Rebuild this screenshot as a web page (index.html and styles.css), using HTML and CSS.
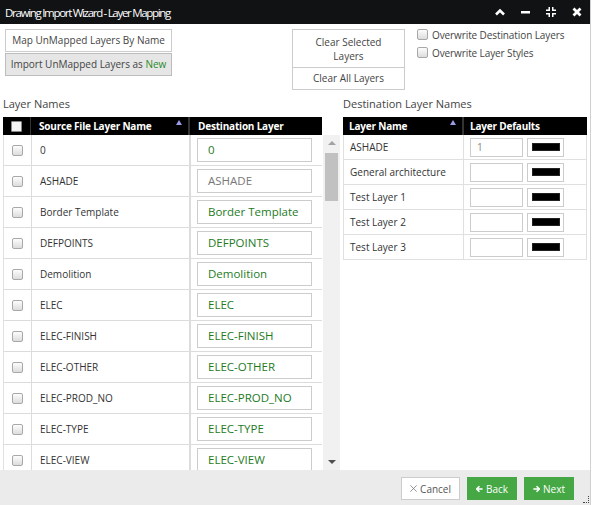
FILE: index.html
```html
<!DOCTYPE html>
<html lang="en">
<head>
  <meta charset="UTF-8">
  <title>Drawing Import Wizard - Layer Mapping</title>
  <link rel="stylesheet" href="styles.css">
</head>
<body>
<div class="dialog">
  <div class="titlebar">
    <span class="title">Drawing Import Wizard - Layer Mapping</span>
    <div class="win-icons">
      <svg width="10" height="8" viewBox="0 0 10 8"><path d="M1 6.5 L5 2.5 L9 6.5" fill="none" stroke="#fff" stroke-width="2.6"/></svg>
      <svg width="9" height="8" viewBox="0 0 9 8"><rect x="0" y="3" width="9" height="2.5" fill="#fff"/></svg>
      <svg width="10" height="10" viewBox="0 0 10 10" fill="#fff">
        <path d="M0 2.5 H2.5 V0 H4 V4 H0 Z"/>
        <path d="M10 2.5 H7.5 V0 H6 V4 H10 Z"/>
        <path d="M0 7.5 H2.5 V10 H4 V6 H0 Z"/>
        <path d="M10 7.5 H7.5 V10 H6 V6 H10 Z"/>
      </svg>
      <svg width="10" height="10" viewBox="0 0 10 10"><path d="M1.5 1.5 L8.5 8.5 M8.5 1.5 L1.5 8.5" stroke="#fff" stroke-width="2.8"/></svg>
    </div>
  </div>

  <div class="toolbar">
    <div class="map-btns">
      <button class="btn">Map UnMapped Layers By Name</button>
      <button class="btn btn-grey">Import UnMapped Layers as <span class="green">New</span></button>
    </div>
    <div class="clear-btns">
      <button class="btn btn-tall">Clear Selected<br>Layers</button>
      <button class="btn">Clear All Layers</button>
    </div>
    <div class="options">
      <label class="opt"><span class="cb"></span>Overwrite Destination Layers</label>
      <label class="opt"><span class="cb"></span>Overwrite Layer Styles</label>
    </div>
  </div>

  <div class="panels">
    <div class="panel panel-left">
      <div class="panel-title">Layer Names</div>
      <div class="left-grid">
        <div class="grid-main">
          <div class="grid-head">
            <div class="col-cb"><span class="cb cb-head"></span></div>
            <div class="col-src">Source File Layer Name <span class="sort"></span></div>
            <div class="col-dst">Destination Layer</div>
          </div>
          <div class="grid-body">
            <div class="row"><div class="col-cb"><span class="cb"></span></div><div class="col-src">0</div><div class="col-dst"><div class="field">0</div></div></div>
            <div class="row"><div class="col-cb"><span class="cb"></span></div><div class="col-src">ASHADE</div><div class="col-dst"><div class="field field-grey">ASHADE</div></div></div>
            <div class="row"><div class="col-cb"><span class="cb"></span></div><div class="col-src">Border Template</div><div class="col-dst"><div class="field">Border Template</div></div></div>
            <div class="row"><div class="col-cb"><span class="cb"></span></div><div class="col-src">DEFPOINTS</div><div class="col-dst"><div class="field">DEFPOINTS</div></div></div>
            <div class="row"><div class="col-cb"><span class="cb"></span></div><div class="col-src">Demolition</div><div class="col-dst"><div class="field">Demolition</div></div></div>
            <div class="row"><div class="col-cb"><span class="cb"></span></div><div class="col-src">ELEC</div><div class="col-dst"><div class="field">ELEC</div></div></div>
            <div class="row"><div class="col-cb"><span class="cb"></span></div><div class="col-src">ELEC-FINISH</div><div class="col-dst"><div class="field">ELEC-FINISH</div></div></div>
            <div class="row"><div class="col-cb"><span class="cb"></span></div><div class="col-src">ELEC-OTHER</div><div class="col-dst"><div class="field">ELEC-OTHER</div></div></div>
            <div class="row"><div class="col-cb"><span class="cb"></span></div><div class="col-src">ELEC-PROD_NO</div><div class="col-dst"><div class="field">ELEC-PROD_NO</div></div></div>
            <div class="row"><div class="col-cb"><span class="cb"></span></div><div class="col-src">ELEC-TYPE</div><div class="col-dst"><div class="field">ELEC-TYPE</div></div></div>
            <div class="row"><div class="col-cb"><span class="cb"></span></div><div class="col-src">ELEC-VIEW</div><div class="col-dst"><div class="field">ELEC-VIEW</div></div></div>
          </div>
        </div>
        <div class="scrollbar">
          <span class="arrow-up"></span>
          <div class="thumb"></div>
          <span class="arrow-down"></span>
        </div>
      </div>
    </div>

    <div class="panel panel-right">
      <div class="panel-title">Destination Layer Names</div>
      <div class="dest-grid">
        <div class="grid-head">
          <div class="col-name">Layer Name <span class="sort"></span></div>
          <div class="col-def">Layer Defaults</div>
        </div>
        <div class="dest-row"><div class="col-name">ASHADE</div><div class="col-def"><div class="num-field">1</div><div class="color-field"><span class="swatch"></span></div></div></div>
        <div class="dest-row"><div class="col-name">General architecture</div><div class="col-def"><div class="num-field"></div><div class="color-field"><span class="swatch"></span></div></div></div>
        <div class="dest-row"><div class="col-name">Test Layer 1</div><div class="col-def"><div class="num-field"></div><div class="color-field"><span class="swatch"></span></div></div></div>
        <div class="dest-row"><div class="col-name">Test Layer 2</div><div class="col-def"><div class="num-field"></div><div class="color-field"><span class="swatch"></span></div></div></div>
        <div class="dest-row"><div class="col-name">Test Layer 3</div><div class="col-def"><div class="num-field"></div><div class="color-field"><span class="swatch"></span></div></div></div>
      </div>
    </div>
  </div>

  <div class="footer">
    <button class="btn-cancel"><svg width="9" height="9" viewBox="0 0 9 9"><path d="M0.5 0.5 L8.5 8.5 M8.5 0.5 L0.5 8.5" stroke="#777" stroke-width="1"/></svg>Cancel</button>
    <button class="btn-green"><svg width="10" height="10" viewBox="0 0 10 10"><path d="M5 1 L1 5 L5 9 M1.5 5 H9.5" fill="none" stroke="#fff" stroke-width="2.2"/></svg>Back</button>
    <button class="btn-green"><svg width="10" height="10" viewBox="0 0 10 10"><path d="M5 1 L9 5 L5 9 M8.5 5 H0.5" fill="none" stroke="#fff" stroke-width="2.2"/></svg>Next</button>
    <span class="grip"></span>
  </div>
</div>
</body>
</html>
```

FILE: styles.css
```css
body {
  margin: 0;
  background: #fff;
  font-family: "Open Sans", "DejaVu Sans", sans-serif;
  color: #333;
}

.dialog {
  width: 590px;
  height: 505px;
  border-right: 1px solid #d0d0d0;
  display: flex;
  flex-direction: column;
  position: relative;
}

/* title bar */
.titlebar {
  height: 24px;
  background: #111214;
  display: flex;
  align-items: center;
  justify-content: space-between;
  padding: 0 8px 0 5px;
}
.title {
  color: #fff;
  font-size: 11.5px;
  letter-spacing: -1.3px;
}
.win-icons {
  display: flex;
  align-items: center;
  gap: 16px;
}
.win-icons svg { display: block; }

/* toolbar */
.toolbar {
  display: flex;
  padding: 5px 5px 5px 5px;
  height: 61px;
}
.btn {
  display: block;
  font-family: inherit;
  font-size: 10px;
  white-space: nowrap;
  color: #444;
  background: #fff;
  border: 1px solid #ccc;
  height: 23px;
  padding: 0;
  margin: 0;
  line-height: 21px;
}
.btn-grey {
  background: #e6e6e6;
  border-color: #bdbdbd;
  margin-top: 1px;
}
.green { color: #2a8a2a; }
.map-btns { width: 167px; }
.map-btns .btn { width: 167px; }
.clear-btns {
  width: 113px;
  margin-left: 120px;
}
.clear-btns .btn { width: 113px; }
.btn-tall {
  height: 38px;
  line-height: 14px;
  border-bottom: none;
}
.options {
  margin-left: 12px;
  margin-top: -2px;
  display: flex;
  flex-direction: column;
  gap: 3px;
}
.opt {
  display: flex;
  align-items: center;
  font-size: 10px;
  letter-spacing: -0.1px;
  color: #444;
  height: 15px;
}
.opt .cb { margin-right: 4px; }

.cb {
  display: inline-block;
  width: 9px;
  height: 9px;
  border: 1px solid #a8a8a8;
  border-radius: 2px;
  background: linear-gradient(#fdfdfd, #dcdcdc);
}
.cb-head {
  background: #f4f4f4;
  border-color: #888;
  border-radius: 1px;
}

/* panels */
.panels {
  display: flex;
  height: 375px;
}
.panel-title {
  height: 22px;
  line-height: 18px;
  font-size: 11px;
  color: #444;
}
.panel-left {
  width: 340px;
  padding-left: 3px;
}
.panel-right {
  width: 244px;
}

.grid-head {
  display: flex;
  height: 18px;
  background: #000;
  color: #fff;
  font-size: 10px;
  font-weight: bold;
  letter-spacing: -0.2px;
  line-height: 18px;
}
.sort {
  position: absolute;
  right: 6px;
  top: 3px;
  width: 0;
  height: 0;
  border-left: 3px solid transparent;
  border-right: 3px solid transparent;
  border-bottom: 5px solid #9c9ce6;
}

.left-grid { display: flex; }
.grid-main { width: 319px; }
.grid-body {
  height: 335px;
  overflow: hidden;
  border-left: 1px solid #e0e0e0;
}
.col-cb {
  width: 27px;
  display: flex;
  align-items: center;
  justify-content: center;
  flex: none;
}
.col-src {
  width: 149px;
  padding-left: 8px;
  flex: none;
  position: relative;
  font-size: 10px;
}
.grid-head .col-src { border-left: 1px solid #333; color: #fff; }
.col-dst {
  flex: 1;
  padding-left: 8px;
  font-size: 10px;
}
.grid-head .col-dst { border-left: 2px solid #333; }

.row {
  display: flex;
  height: 31px;
  border-bottom: 1px solid #dcdcdc;
  box-sizing: border-box;
}
.row .col-src {
  border-left: 1px solid #dcdcdc;
  display: flex;
  align-items: center;
  color: #333;
}
.row .col-dst {
  border-left: 2px solid #dcdcdc;
  display: flex;
  align-items: center;
  padding-left: 6px;
}
.field {
  width: 115px;
  height: 24px;
  box-sizing: border-box;
  border: 1px solid #ccc;
  padding-left: 10px;
  font-size: 11.5px;
  line-height: 22px;
  color: #1e7b1e;
}
.field-grey { color: #777; }

.scrollbar {
  width: 17px;
  margin-top: 18px;
  height: 335px;
  background: #f1f1f1;
  position: relative;
  margin-left: 1px;
}
.thumb {
  position: absolute;
  left: 2px;
  top: 18px;
  width: 13px;
  height: 48px;
  background: #c1c1c1;
}
.arrow-up, .arrow-down {
  position: absolute;
  left: 5px;
  width: 0;
  height: 0;
  border-left: 4px solid transparent;
  border-right: 4px solid transparent;
}
.arrow-up { top: 6px; border-bottom: 4px solid #a3a3a3; }
.arrow-down { bottom: 6px; border-top: 4px solid #505050; }

/* destination grid */
.dest-grid { width: 244px; }
.col-name {
  width: 119px;
  padding-left: 6px;
  box-sizing: border-box;
  flex: none;
  position: relative;
  font-size: 10px;
}
.col-def {
  flex: 1;
  padding-left: 6px;
  font-size: 10px;
}
.grid-head .col-def { border-left: 2px solid #333; }
.dest-row {
  display: flex;
  height: 25px;
  border: 1px solid #e0e0e0;
  border-top: none;
  box-sizing: border-box;
}
.dest-row .col-name {
  display: flex;
  align-items: center;
  color: #333;
}
.dest-row .col-def {
  border-left: 1px solid #e0e0e0;
  display: flex;
  align-items: center;
  gap: 4px;
}
.num-field {
  width: 53px;
  height: 19px;
  box-sizing: border-box;
  border: 1px solid #ccc;
  font-size: 10px;
  color: #888;
  padding-left: 6px;
  line-height: 17px;
}
.color-field {
  width: 37px;
  height: 19px;
  box-sizing: border-box;
  border: 1px solid #ccc;
  display: flex;
  align-items: center;
  justify-content: center;
}
.swatch {
  width: 26px;
  height: 6px;
  background: #000;
  border: 1px solid #222;
}

/* footer */
.footer {
  flex: 1;
  background: #ebebeb;
  display: flex;
  justify-content: flex-end;
  align-items: flex-start;
  padding: 7px 16px 0 0;
  gap: 7px;
  position: relative;
}
.footer button {
  font-family: inherit;
  font-size: 10px;
  height: 23px;
  padding: 0 8px;
  display: flex;
  align-items: center;
  gap: 3px;
  margin: 0;
}
.btn-cancel {
  background: #fff;
  border: 1px solid #ccc;
  color: #555;
  width: 59px;
}
.btn-green {
  background: #45a845;
  border: 1px solid #45a845;
  color: #fff;
  width: 50px;
}
.grip {
  position: absolute;
  right: 1px;
  bottom: 2px;
  width: 5px;
  height: 6px;
  border-right: 1px dotted #444;
  border-bottom: 1px dotted #444;
}
```
